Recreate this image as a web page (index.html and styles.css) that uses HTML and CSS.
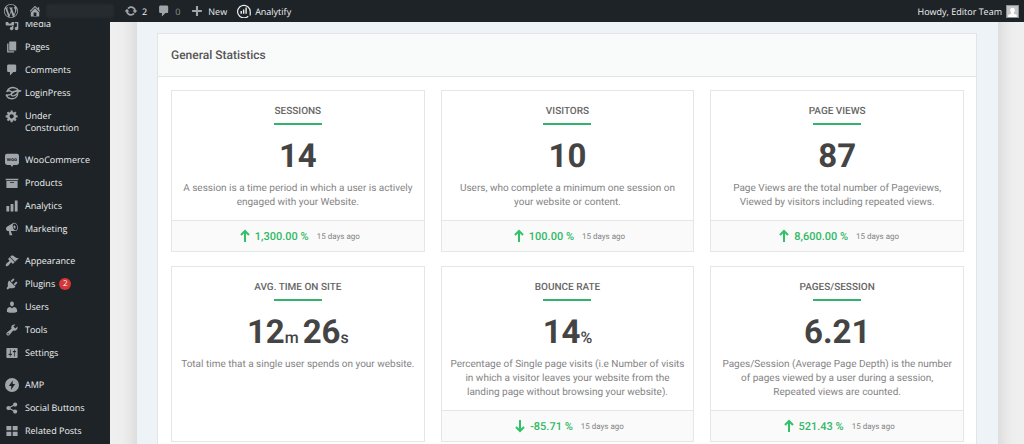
FILE: index.html
```html
<!DOCTYPE html>
<html lang="en">
<head>
  <meta charset="UTF-8">
  <meta name="viewport" content="width=device-width, initial-scale=1.0">
  <title>Analytify Dashboard</title>
  <link rel="stylesheet" href="styles.css">
</head>
<body>
  <header class="adminbar">
    <a href="#" class="bar-item bar-logo" aria-label="About WordPress">
      <svg class="icon" viewBox="0 0 20 20"><path d="M20 10c0-5.51-4.49-10-10-10C4.48 0 0 4.49 0 10c0 5.52 4.48 10 10 10 5.51 0 10-4.48 10-10zM7.78 15.37L4.37 6.22c.55-.02 1.17-.08 1.17-.08.5-.06.44-1.13-.06-1.11 0 0-1.45.11-2.37.11-.18 0-.37 0-.58-.01C4.12 2.69 6.87 1.11 10 1.11c2.33 0 4.45.87 6.05 2.34-.68-.11-1.65.39-1.65 1.58 0 .74.45 1.36.9 2.1.35.61.55 1.36.55 2.46 0 1.49-1.4 5-1.4 5l-3.03-8.37c.54-.02.82-.17.82-.17.5-.05.44-1.25-.06-1.22 0 0-1.44.12-2.38.12-.87 0-2.33-.12-2.33-.12-.5-.03-.56 1.2-.06 1.22l.92.08 1.26 3.41zM17.41 10c.24-.64.74-1.87.43-4.25.7 1.29 1.05 2.71 1.05 4.25 0 3.29-1.73 6.24-4.4 7.78.97-2.59 1.94-5.2 2.92-7.78zM6.1 18.09C3.12 16.65 1.11 13.53 1.11 10c0-1.3.23-2.48.72-3.59C3.25 10.3 4.67 14.2 6.1 18.09zm4.03-6.63l2.58 6.98c-.86.29-1.76.45-2.71.45-.79 0-1.57-.11-2.29-.33.81-2.38 1.62-4.74 2.42-7.1z"/></svg>
    </a>
    <a href="#" class="bar-item bar-site" aria-label="Visit site">
      <svg class="icon" viewBox="0 0 20 20"><path d="M16 8.5l1.53 1.53-1.06 1.06L10 4.6l-6.47 6.49-1.06-1.06L10 2.5l4 4v-2h2v4zm-6-2.46l6 5.99V18H4v-5.97zM12 17v-5H8v5h4z"/></svg>
      <span class="site-name"></span>
    </a>
    <a href="#" class="bar-item">
      <svg class="icon" viewBox="0 0 20 20"><path d="M10.2 3.28c3.53 0 6.43 2.61 6.92 6h2.08l-3.5 4-3.5-4h2.32c-.45-1.97-2.21-3.45-4.32-3.45-1.45 0-2.73.71-3.54 1.78L4.95 5.66C6.23 4.2 8.11 3.28 10.2 3.28zm-.4 13.44c-3.52 0-6.43-2.61-6.92-6H.8l3.5-4c1.17 1.33 2.33 2.67 3.5 4H5.48c.45 1.97 2.21 3.45 4.32 3.45 1.45 0 2.73-.71 3.54-1.78l1.71 1.95c-1.28 1.46-3.15 2.38-5.25 2.38z"/></svg>
      <span>2</span>
    </a>
    <a href="#" class="bar-item">
      <svg class="icon" viewBox="0 0 20 20"><path d="M5 2h9c1.1 0 2 .9 2 2v7c0 1.1-.9 2-2 2h-2l-5 5v-5H5c-1.1 0-2-.9-2-2V4c0-1.1.9-2 2-2z"/></svg>
      <span class="count-zero">0</span>
    </a>
    <a href="#" class="bar-item">
      <svg class="icon" viewBox="0 0 20 20"><path d="M17 8.5v3h-5.500v5.500h-3v-5.500H3v-3h5.500V3h3v5.500z"/></svg>
      <span>New</span>
    </a>
    <a href="#" class="bar-item">
      <svg class="icon icon-light" viewBox="0 0 20 20"><path d="M16 17.500A9 9 0 1 1 18.900 11v5.500" fill="none" stroke="currentColor" stroke-width="1.700"/><path d="M5 10h2v4H5zM8.500 8h2v6h-2zM12 5h2v9h-2z"/></svg>
      <span>Analytify</span>
    </a>
    <a href="#" class="bar-item bar-user">
      <span>Howdy, Editor Team</span>
      <svg class="avatar" viewBox="0 0 26 26"><path fill="#c4c4c4" d="M0 0h26v26H0z"/><path fill="#fff" d="M13 4c4 0 6 3 5.500 6.500-.3 2.500-1.500 4.500-2.500 5.500v2l7 3v5H3v-5l7-3v-2c-1-1-2.200-3-2.500-5.500C7 7 9 4 13 4z"/></svg>
    </a>
  </header>

  <div class="layout">
    <nav class="sidebar">
      <ul class="menu">
        <li><a href="#"><svg class="icon" viewBox="0 0 20 20"><path d="M13 11V4c0-.55-.45-1-1-1h-1.670L9 1H5L3.670 3H2c-.55 0-1 .45-1 1v7c0 .55.45 1 1 1h10c.55 0 1-.45 1-1zM7 4.500c1.380 0 2.500 1.120 2.500 2.500S8.380 9.500 7 9.500 4.500 8.380 4.500 7 5.620 4.500 7 4.500zM14 6h5v10.500c0 1.380-1.120 2.500-2.500 2.500S14 17.880 14 16.500s1.120-2.500 2.500-2.500c.17 0 .34.02.5.05V9h-3V6zm-4 8.050V13h2v3.500c0 1.380-1.120 2.500-2.500 2.500S7 17.880 7 16.500 8.120 14 9.500 14c.17 0 .34.02.5.05z"/></svg>Media</a></li>
        <li><a href="#"><svg class="icon" viewBox="0 0 20 20"><path d="M6 15V2h10v13H6zm-1 1h8v2H3V5h2v11z"/></svg>Pages</a></li>
        <li><a href="#"><svg class="icon" viewBox="0 0 20 20"><path d="M5 2h9c1.1 0 2 .9 2 2v7c0 1.1-.9 2-2 2h-2l-5 5v-5H5c-1.1 0-2-.9-2-2V4c0-1.1.9-2 2-2z"/></svg>Comments</a></li>
        <li><a href="#"><svg class="icon icon-wide" viewBox="0 0 24 20"><g fill="none" stroke="currentColor" stroke-width="2"><path d="M3 8C4 3 10 1 15 3c3 1 4 3 3 5"/><path d="M18 11c0 5-5 8-10 7-4-1-6-3-6-6"/><path d="M1 13c4 1 8-1 11-4s7-3 11-2c-3 0-5 2-6 4-3 4-8 4-8 1 0-3 4-6 8-4"/><path d="M2 8c3-2 6-1 8 1"/></g></svg>LoginPress</a></li>
        <li><a href="#"><svg class="icon" viewBox="0 0 20 20"><path d="M18 12h-2.180c-.17.7-.44 1.350-.81 1.930l1.540 1.540-2.100 2.100-1.540-1.540c-.58.36-1.230.63-1.910.79V19H8v-2.180c-.68-.16-1.330-.43-1.910-.79l-1.540 1.540-2.120-2.120 1.540-1.540c-.36-.58-.63-1.230-.79-1.910H1V9.030h2.170c.16-.7.44-1.350.8-1.940L2.430 5.550l2.100-2.100 1.540 1.540c.58-.37 1.240-.64 1.930-.81V2h3v2.180c.68.16 1.330.43 1.910.79l1.540-1.540 2.120 2.120-1.540 1.540c.36.59.64 1.240.8 1.940H18V12zm-8.500 1.500c1.660 0 3-1.340 3-3s-1.340-3-3-3-3 1.340-3 3 1.340 3 3 3z"/></svg>Under Construction</a></li>
      </ul>
      <ul class="menu">
        <li><a href="#"><svg class="icon" viewBox="0 0 20 20"><path d="M3 1h14a3 3 0 0 1 3 3v10a3 3 0 0 1-3 3h-5l-2 3-2-3H3a3 3 0 0 1-3-3V4a3 3 0 0 1 3-3z"/><text class="woo" x="10" y="12" text-anchor="middle">woo</text></svg>WooCommerce</a></li>
        <li><a href="#"><svg class="icon" viewBox="0 0 20 20"><path d="M19 4v2H1V4h18zM2 7h16v10H2V7zm11 3V9H7v1h6z"/></svg>Products</a></li>
        <li><a href="#"><svg class="icon" viewBox="0 0 20 20"><path d="M18 18V2h-4v16h4zm-6 0V7H8v11h4zm-6 0v-8H2v8h4z"/></svg>Analytics</a></li>
        <li><a href="#"><svg class="icon" viewBox="0 0 20 20"><path d="M18.150 5.940c.46 1.620.38 3.220-.02 4.480-.42 1.280-1.260 2.180-2.300 2.480-.16.06-.26.06-.4.06-.06.02-.12.02-.18.02-.06.02-.14.02-.22.02h-6.800l2.220 5.500c.02.14-.06.26-.14.34-.08.1-.24.16-.34.16H6.950c-.1 0-.26-.06-.34-.16-.08-.08-.16-.2-.14-.34l-1-5.500H4.250l-.02-.02c-.5.06-1.080-.18-1.540-.62s-.88-1.080-1.060-1.880c-.24-.8-.2-1.560-.02-2.200.18-.62.58-1.080 1.060-1.300l.02-.02 9-5.400c.1-.06.18-.1.24-.16.06-.04.14-.08.24-.12.16-.08.28-.12.5-.18 1.040-.3 2.240.1 3.220.98s1.840 2.240 2.260 3.860zm-2.580 5.980h-.02c.4-.1.74-.34 1.040-.7.58-.7.86-1.760.86-3.040 0-.64-.1-1.300-.28-1.980-.34-1.360-1.020-2.500-1.780-3.240s-1.680-1.100-2.460-.88c-.82.22-1.400.96-1.700 2-.32 1.040-.28 2.360.06 3.720.38 1.360 1 2.500 1.800 3.240.78.74 1.620 1.100 2.480.88zm-2.540-7.080c.22-.04.42-.02.62.04.38.16.76.48 1.020 1s.42 1.200.42 1.780c0 .3-.04.56-.12.8-.18.48-.44.84-.86.94-.34.1-.8-.06-1.140-.4s-.64-.86-.78-1.500c-.18-.62-.12-1.240.02-1.720s.48-.84.82-.94z"/></svg>Marketing</a></li>
      </ul>
      <ul class="menu">
        <li><a href="#"><svg class="icon" viewBox="0 0 20 20"><path d="M14.480 11.060L7.410 3.990l1.500-1.500c.5-.56 2.300-.47 3.510.32 1.210.8 1.430 1.280 2.910 2.100 1.180.64 2.450 1.260 4.450.85zm-.71.71L6.700 4.700 4.930 6.470c-.39.39-.39 1.020 0 1.410l1.060 1.060c.39.39.39 1.030 0 1.420-.6.6-1.430 1.110-2.210 1.690-.35.26-.7.53-1.010.84C1.430 14.230.4 16.080 1.400 17.070c.99 1 2.840-.03 4.180-1.360.31-.31.58-.66.85-1.020.57-.78 1.080-1.610 1.690-2.210.39-.39 1.020-.39 1.410 0l1.060 1.060c.39.39 1.020.39 1.410 0z"/></svg>Appearance</a></li>
        <li><a href="#"><svg class="icon" viewBox="0 0 20 20"><path d="M13.110 4.360L9.870 7.600 8 5.730l3.240-3.240c.35-.34 1.050-.2 1.560.32.52.51.66 1.210.31 1.550zm-8 1.770l.91-1.120 9.010 9.010-1.190.84c-.71.71-2.630 1.160-3.820 1.160H6.140L4.900 17.260c-.59.59-1.540.59-2.120 0-.59-.58-.59-1.530 0-2.120l1.240-1.240v-3.880c0-1.130.4-3.190 1.090-3.890zm7.260 3.970l3.240-3.240c.34-.35 1.040-.21 1.550.31.52.51.66 1.210.31 1.550l-3.240 3.250z"/></svg>Plugins <span class="badge">2</span></a></li>
        <li><a href="#"><svg class="icon" viewBox="0 0 20 20"><path d="M10 9.250c-2.270 0-2.730-3.440-2.730-3.440C7 4.020 7.820 2 9.970 2c2.160 0 2.980 2.020 2.710 3.810 0 0-.41 3.440-2.680 3.440zm0 2.570L12.720 10c2.390 0 4.520 2.330 4.520 4.530v2.490s-3.650 1.130-7.240 1.130c-3.650 0-7.240-1.130-7.240-1.130v-2.490c0-2.250 1.940-4.480 4.470-4.480z"/></svg>Users</a></li>
        <li><a href="#"><svg class="icon" viewBox="0 0 20 20"><path d="M16.680 9.770c-1.340 1.340-3.300 1.670-4.950.99l-5.410 6.520c-.99.99-2.590.99-3.580 0s-.99-2.590 0-3.570l6.520-5.420c-.68-1.650-.35-3.610.99-4.950 1.280-1.280 3.120-1.620 4.720-1.060l-2.890 2.890 2.820 2.820 2.860-2.870c.53 1.580.18 3.390-1.080 4.650zM3.810 16.210c.4.39 1.040.39 1.430 0 .4-.4.4-1.040 0-1.430-.39-.4-1.030-.4-1.430 0-.39.39-.39 1.030 0 1.430z"/></svg>Tools</a></li>
        <li><a href="#"><svg class="icon" viewBox="0 0 20 20"><path d="M18 16V4c0-.55-.45-1-1-1H3c-.55 0-1 .45-1 1v12c0 .55.45 1 1 1h14c.55 0 1-.45 1-1zM8 11h1c.55 0 1 .45 1 1s-.45 1-1 1H8v1.500c0 .28-.22.5-.5.5s-.5-.22-.5-.5V13H6c-.55 0-1-.45-1-1s.45-1 1-1h1V5.500c0-.28.22-.5.5-.5s.5.22.5.5V11zm5-2h-1c-.55 0-1-.45-1-1s.45-1 1-1h1V5.500c0-.28.22-.5.5-.5s.5.22.5.5V7h1c.55 0 1 .45 1 1s-.45 1-1 1h-1v5.500c0 .28-.22.5-.5.5s-.5-.22-.5-.5V9z"/></svg>Settings</a></li>
      </ul>
      <ul class="menu">
        <li><a href="#"><svg class="icon" viewBox="0 0 20 20"><path fill-rule="evenodd" d="M10 0a10 10 0 1 1 0 20 10 10 0 0 1 0-20zm1 3.500L5.500 11.500H9l-.5 5.500 6-8.500H11z"/></svg>AMP</a></li>
        <li><a href="#"><svg class="icon" viewBox="0 0 20 20"><path d="M14.500 12c1.660 0 3 1.340 3 3s-1.340 3-3 3-3-1.340-3-3c0-.24.03-.46.09-.69l-4.380-2.300c-.55.61-1.330.99-2.210.99-1.660 0-3-1.340-3-3s1.340-3 3-3c.88 0 1.660.39 2.210.99l4.380-2.300c-.06-.23-.09-.45-.09-.69 0-1.660 1.340-3 3-3s3 1.340 3 3-1.340 3-3 3c-.88 0-1.660-.39-2.210-.99l-4.380 2.300c.06.23.09.45.09.69s-.03.46-.09.69l4.380 2.300c.55-.61 1.330-.99 2.210-.99z"/></svg>Social Buttons</a></li>
        <li><a href="#"><svg class="icon" viewBox="0 0 20 20"><path d="M2 3h7v6H2zM11 3h7v6h-7zM2 11h7v6H2zM11 11h7v6h-7z"/></svg>Related Posts</a></li>
      </ul>
    </nav>

    <main class="content">
      <div class="dashboard">
        <section class="panel">
          <h2 class="panel-title">General Statistics</h2>
          <div class="stats">
            <article class="card">
              <h3>Sessions</h3>
              <p class="value">14</p>
              <p class="text">A session is a time period in which a user is actively engaged with your Website.</p>
              <footer>
                <svg class="arrow" viewBox="0 0 10 14"><path d="M5 13V2M1 6l4-4 4 4"/></svg>
                <span class="change">1,300.00 %</span>
                <span class="ago">15 days ago</span>
              </footer>
            </article>
            <article class="card">
              <h3>Visitors</h3>
              <p class="value">10</p>
              <p class="text">Users, who complete a minimum one session on your website or content.</p>
              <footer>
                <svg class="arrow" viewBox="0 0 10 14"><path d="M5 13V2M1 6l4-4 4 4"/></svg>
                <span class="change">100.00 %</span>
                <span class="ago">15 days ago</span>
              </footer>
            </article>
            <article class="card">
              <h3>Page Views</h3>
              <p class="value">87</p>
              <p class="text">Page Views are the total number of Pageviews, Viewed by visitors including repeated views.</p>
              <footer>
                <svg class="arrow" viewBox="0 0 10 14"><path d="M5 13V2M1 6l4-4 4 4"/></svg>
                <span class="change">8,600.00 %</span>
                <span class="ago">15 days ago</span>
              </footer>
            </article>
            <article class="card">
              <h3>Avg. time on site</h3>
              <p class="value">12<small>m </small>26<small>s</small></p>
              <p class="text">Total time that a single user spends on your website.</p>
            </article>
            <article class="card">
              <h3>Bounce Rate</h3>
              <p class="value">14<small>%</small></p>
              <p class="text">Percentage of Single page visits (i.e Number of visits in which a visitor leaves your website from the landing page without browsing your website).</p>
              <footer>
                <svg class="arrow" viewBox="0 0 10 14"><path d="M5 1v11M1 8l4 4 4-4"/></svg>
                <span class="change">-85.71 %</span>
                <span class="ago">15 days ago</span>
              </footer>
            </article>
            <article class="card">
              <h3>Pages/Session</h3>
              <p class="value">6.21</p>
              <p class="text">Pages/Session (Average Page Depth) is the number of pages viewed by a user during a session, Repeated views are counted.</p>
              <footer>
                <svg class="arrow" viewBox="0 0 10 14"><path d="M5 13V2M1 6l4-4 4 4"/></svg>
                <span class="change">521.43 %</span>
                <span class="ago">15 days ago</span>
              </footer>
            </article>
          </div>
        </section>
      </div>
    </main>
  </div>
</body>
</html>
```
FILE: styles.css
```css
* {
  box-sizing: border-box;
}
body {
  margin: 0;
  font-family: 'Open Sans', sans-serif;
  font-size: 9px;
  text-rendering: geometricPrecision;
  background-color: #efefef;
}
a {
  color: inherit;
  text-decoration: none;
}
.icon {
  width: 14px;
  height: 14px;
  flex: none;
  fill: currentColor;
  color: #a0a5aa;
}
.icon-light {
  color: #f0f0f1;
}

/* top bar */
.adminbar {
  position: fixed;
  top: 0;
  left: 0;
  right: 0;
  z-index: 10;
  height: 22px;
  padding: 0 5px 0 4px;
  display: flex;
  align-items: center;
  gap: 10px;
  background-color: #1d2327;
  color: #f0f0f1;
}
.bar-item {
  display: flex;
  align-items: center;
  gap: 4px;
}
.site-name {
  width: 68px;
  height: 14px;
  border-radius: 3px;
  background-color: #262b30;
  filter: blur(1px);
}
.count-zero {
  color: #8c9196;
}
.bar-user {
  margin-left: auto;
}
.avatar {
  width: 13px;
  height: 13px;
  border: 1px solid #8c8f94;
}

.layout {
  display: flex;
  height: 100vh;
  overflow: hidden;
}

/* left menu */
.sidebar {
  flex: none;
  width: 110px;
  padding-top: 12px;
  display: flex;
  flex-direction: column;
  gap: 9px;
  background-color: #1d2327;
  color: #f0f0f1;
}
.menu {
  list-style: none;
  margin: 0;
  padding: 0;
}
.menu a {
  display: flex;
  gap: 6px;
  padding: 6px 12px 5px 5px;
  line-height: 12px;
}
.menu .icon {
  margin: -1px 0;
}
.menu .icon-wide {
  width: 17px;
  margin-right: -3px;
}
.woo {
  font: bold 7px 'Open Sans', sans-serif;
  fill: #1d2327;
}
.badge {
  width: 12px;
  height: 12px;
  margin-left: -2px;
  border-radius: 50%;
  background-color: #d63638;
  color: #fff;
  font-size: 8px;
  text-align: center;
}

/* dashboard */
.content {
  flex: 1;
  min-width: 0;
  padding: 0 26px 0 27px;
  font-family: Roboto, sans-serif;
}
.dashboard {
  min-height: 100%;
  padding: 33px 21px 20px 20px;
  background-color: #eef3f8;
  box-shadow: 0 0 18px rgba(0, 0, 0, 0.15);
}
.panel {
  border: 1px solid #e2e5e8;
  background-color: #fff;
}
.panel-title {
  margin: 0;
  padding: 13px;
  border-bottom: 1px solid #e2e5e8;
  background-color: #f9fafa;
  color: #555;
  font-size: 12px;
  font-weight: 500;
  line-height: 16px;
}
.stats {
  display: grid;
  grid-template-columns: repeat(3, 1fr);
  gap: 14px 16px;
  padding: 13px 12px 13px 13px;
}
.card {
  display: flex;
  flex-direction: column;
  align-items: center;
  border: 1px solid #e6e6e6;
  text-align: center;
}
.card h3 {
  margin: 14px 0 0;
  color: #666;
  font-size: 10px;
  font-weight: 500;
  line-height: 14px;
  text-transform: uppercase;
}
.card h3::after {
  content: "";
  display: block;
  width: 48px;
  height: 2px;
  margin: 4px auto 0;
  background-color: #34b36f;
}
.value {
  margin: 12px 0 0;
  color: #444;
  font-size: 33px;
  font-weight: 700;
  line-height: 40px;
}
.value small {
  font-size: 16px;
  font-weight: 500;
  line-height: 1;
}
.text {
  margin: 5px 0 10px;
  padding: 0 8px;
  color: #848484;
  font-size: 10px;
  line-height: 14px;
}
.card footer {
  display: flex;
  justify-content: center;
  align-items: center;
  align-self: stretch;
  height: 31px;
  margin-top: auto;
  padding-left: 4px;
  border-top: 1px solid #e6e6e6;
  background-color: #fafafa;
}
.arrow {
  width: 10px;
  height: 14px;
  fill: none;
  stroke: #2fc267;
  stroke-width: 2;
}
.change {
  margin: 0 8px 0 5px;
  color: #2fb866;
  font-size: 11px;
  font-weight: 500;
}
.ago {
  color: #848484;
  font-size: 8px;
}
```
